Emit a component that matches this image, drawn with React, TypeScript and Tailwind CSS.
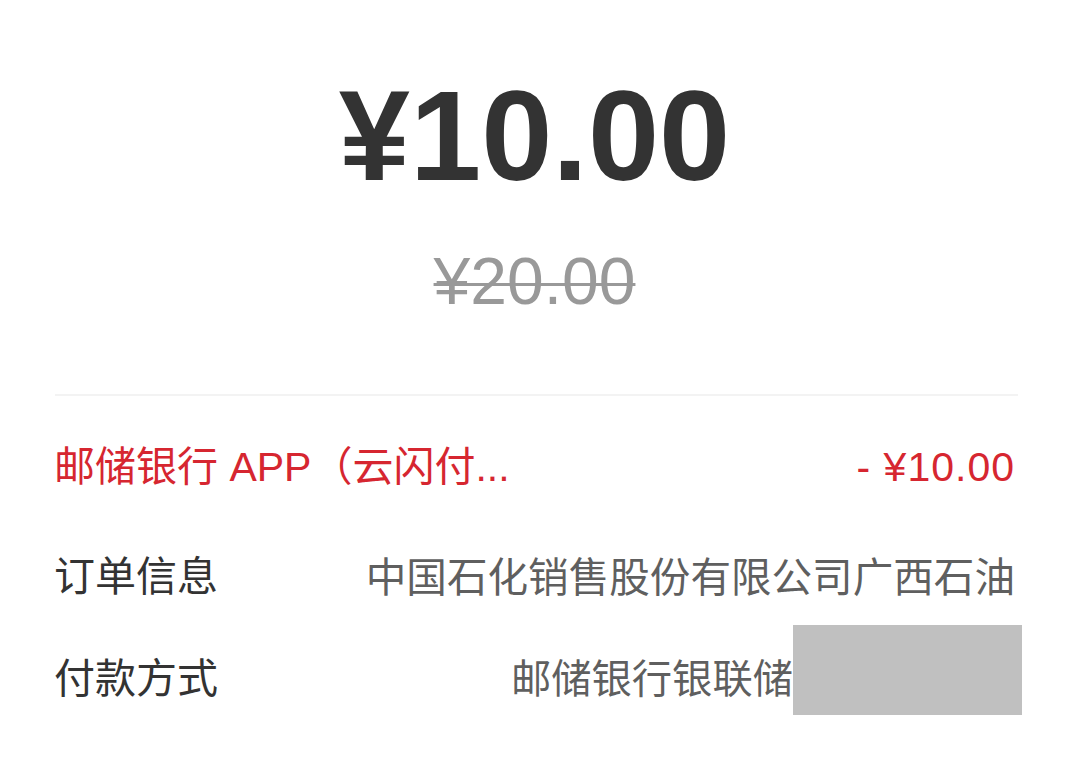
import React from "react";

export default function App() {
  const cjk = { fontFamily: '"Liberation Sans", "Noto Sans CJK SC", sans-serif' };
  return (
    <div className="w-[1069px] h-[764px] bg-white overflow-hidden" style={cjk}>
      <div className="flex flex-col items-center pt-[72px]">
        <div className="text-[128px] leading-none font-bold text-[#333333]">¥10.00</div>
        <div className="mt-[48px] text-[66px] leading-none text-[#999999] line-through decoration-[3px]">¥20.00</div>
      </div>
      <div className="ml-[55px] mr-[51px] mt-[80px] h-[2px] bg-[#f3f3f3]" />
      <div className="px-[54px] flex flex-col">
        <div className="h-[104px] mt-[20px] flex items-center justify-between text-[41px] text-[#d62630]">
          <span>邮储银行 APP（云闪付...</span>
          <span className="tracking-[1px]">- ¥10.00</span>
        </div>
        <div className="h-[104px] mt-[6px] flex items-center justify-between text-[41px]">
          <span className="text-[#333333]">订单信息</span>
          <span className="text-[#5f5f5f] text-[40.6px]">中国石化销售股份有限公司广西石油</span>
        </div>
        <div className="h-[104px] -mt-[2px] flex items-center justify-between text-[41px]">
          <span className="text-[#333333]">付款方式</span>
          <span className="flex items-center">
            <span className="text-[#5f5f5f] text-[40.3px]">邮储银行银联储</span>
            <span className="w-[229px] h-[90px] bg-[#c0c0c0] -mr-[7px] -mt-[20px]" />
          </span>
        </div>
      </div>
    </div>
  );
}
